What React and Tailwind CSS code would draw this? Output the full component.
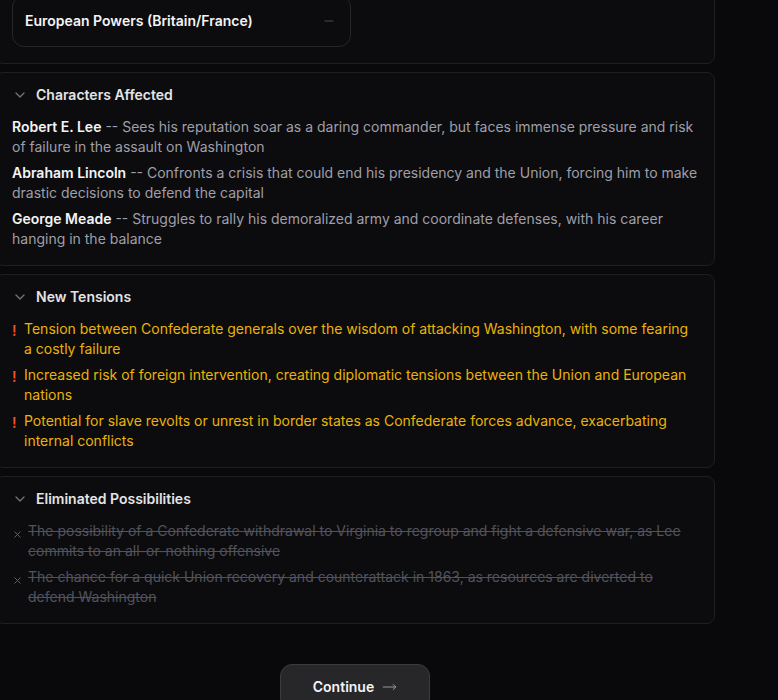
import { ChevronDown, Minus, X, MoveRight } from "lucide-react";

const characters = [
  {
    name: "Robert E. Lee",
    text: "Sees his reputation soar as a daring commander, but faces immense pressure and risk of failure in the assault on Washington",
  },
  {
    name: "Abraham Lincoln",
    text: "Confronts a crisis that could end his presidency and the Union, forcing him to make drastic decisions to defend the capital",
  },
  {
    name: "George Meade",
    text: "Struggles to rally his demoralized army and coordinate defenses, with his career hanging in the balance",
  },
];

const tensions = [
  "Tension between Confederate generals over the wisdom of attacking Washington, with some fearing a costly failure",
  "Increased risk of foreign intervention, creating diplomatic tensions between the Union and European nations",
  "Potential for slave revolts or unrest in border states as Confederate forces advance, exacerbating internal conflicts",
];

const eliminated = [
  "The possibility of a Confederate withdrawal to Virginia to regroup and fight a defensive war, as Lee commits to an all-or-nothing offensive",
  "The chance for a quick Union recovery and counterattack in 1863, as resources are diverted to defend Washington",
];

function Section({ title, children }) {
  return (
    <div className="rounded-lg border border-[#1f1f23] bg-[#0c0c0e]">
      <button className="flex w-full items-center gap-2 px-4 py-3 text-left">
        <ChevronDown className="h-4 w-4 text-zinc-500" strokeWidth={2} />
        <span className="text-sm font-semibold leading-5 text-zinc-200">{title}</span>
      </button>
      <div className="pb-4 pl-4 pr-[14px]">{children}</div>
    </div>
  );
}

export default function App() {
  return (
    <div
      className="min-h-[700px] overflow-hidden bg-[#09090b]"
      style={{ fontFamily: "Inter, 'Noto Sans', sans-serif" }}
    >
      <div className="-ml-[5px] -mt-[38px] w-[720px] space-y-2">
        {/* Stakeholders card, scrolled mostly out of view */}
        <div className="rounded-lg border border-[#1f1f23] bg-[#0c0c0e] px-4 pb-4 pt-[32px]">
          <div className="grid grid-cols-2 gap-2">
            <div className="flex items-center justify-between rounded-xl border border-[#27272a] bg-[#0c0c0e] px-3 py-[15px]">
              <span className="text-sm font-semibold leading-5 text-zinc-100">
                European Powers (Britain/France)
              </span>
              <Minus className="mr-[2px] h-3.5 w-3.5 text-zinc-600" strokeWidth={1.5} />
            </div>
          </div>
        </div>

        <Section title="Characters Affected">
          <div className="space-y-1.5">
            {characters.map((c) => (
              <p key={c.name} className="text-sm leading-5 text-zinc-400">
                <span className="font-semibold text-zinc-100">{c.name}</span> -- {c.text}
              </p>
            ))}
          </div>
        </Section>

        <Section title="New Tensions">
          <div className="space-y-1.5">
            {tensions.map((t) => (
              <div key={t} className="flex gap-2 text-sm leading-5">
                <span className="w-1 shrink-0 pt-[2px] font-semibold text-[#f4511e]">!</span>
                <span className="mr-[3px] text-[#eab308]">{t}</span>
              </div>
            ))}
          </div>
        </Section>

        <Section title="Eliminated Possibilities">
          <div className="space-y-1.5">
            {eliminated.map((t) => (
              <div key={t} className="flex gap-[5px] text-sm leading-5">
                <X className="mt-[8px] h-[11px] w-[11px] shrink-0 text-zinc-500" strokeWidth={1.75} />
                <span className="text-zinc-600 line-through">{t}</span>
              </div>
            ))}
          </div>
        </Section>

        <div className="flex justify-center pt-8">
          <button className="flex items-center gap-2 rounded-xl border border-[#3a3a3f] bg-[#27272a] px-8 py-3 text-sm font-semibold leading-5 text-zinc-100">
            Continue
            <MoveRight className="h-4 w-[15px] text-zinc-400" strokeWidth={1.5} />
          </button>
        </div>
      </div>
    </div>
  );
}
